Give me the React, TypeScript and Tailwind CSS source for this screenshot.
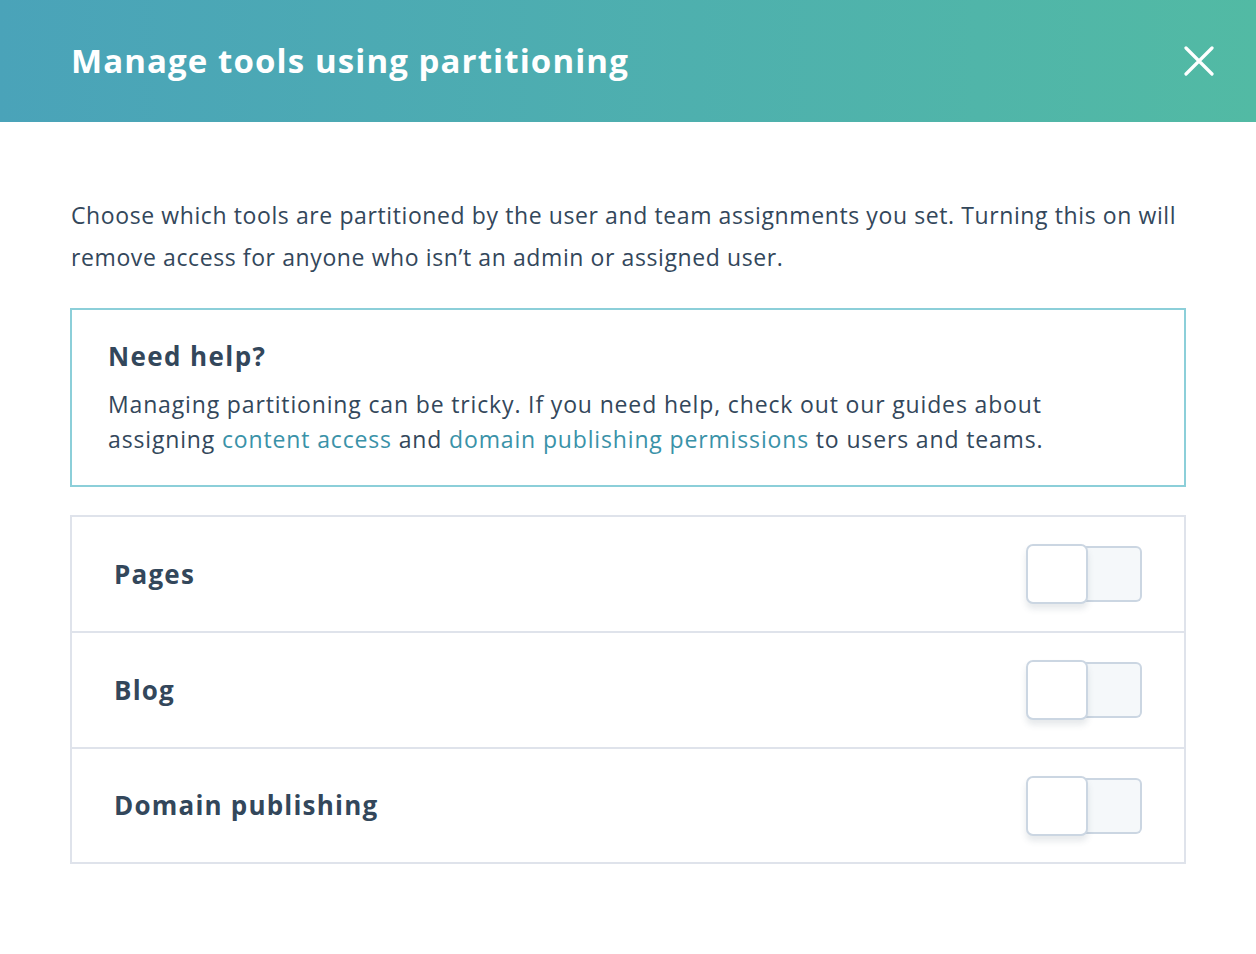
import React from "react";

const tools = [
  { label: "Pages", h: "h-[116px]" },
  { label: "Blog", h: "h-[116px]" },
  { label: "Domain publishing", h: "h-[113px]" },
];

function Toggle() {
  return (
    <div className="flex items-center w-[116px] h-[60px]">
      <div className="relative z-10 w-[62px] h-[60px] rounded-[7px] border-2 border-[#cbd6e2] bg-white shadow-[0_5px_6px_rgba(51,71,91,0.12)]" />
      <div className="-ml-[2px] w-[56px] h-[56px] rounded-r-[6px] border-2 border-l-0 border-[#cbd6e2] bg-[#f5f8fa]" />
    </div>
  );
}

export default function App() {
  return (
    <div
      className="w-[1256px] h-[954px] bg-white text-[#33475b]"
      style={{ fontFamily: "'Open Sans', Lato, sans-serif" }}
    >
      <div className="flex items-center justify-between h-[122px] pl-[71px] pr-[42px] bg-gradient-to-r from-[#4aa3b9] to-[#52baa4]">
        <h1 className="text-[33px] font-bold text-white tracking-[1.1px]">Manage tools using partitioning</h1>
        <button className="w-[30px] h-[30px] flex items-center justify-center">
          <svg width="30" height="30" viewBox="0 0 30 30">
            <path d="M2 2 L28 28 M28 2 L2 28" stroke="white" strokeWidth="3.2" strokeLinecap="round" />
          </svg>
        </button>
      </div>

      <div className="px-[70px] pt-[72px]">
        <p className="text-[23px] leading-[42px] pl-[1px] tracking-[0.6px]">
          Choose which tools are partitioned by the user and team assignments you set. Turning this on will remove access for anyone who isn’t an admin or assigned user.
        </p>

        <div className="mt-[30px] border-2 border-[#8ccfd9] pl-[36px] pr-[30px] pt-[28px] pb-[28px]">
          <h2 className="text-[26px] leading-[36px] font-bold tracking-[1.4px]">Need help?</h2>
          <p className="mt-[13px] text-[23px] leading-[35px] tracking-[0.85px]">
            Managing partitioning can be tricky. If you need help, check out our guides about
            <br />
            assigning <a className="text-[#3a92a8]">content access</a> and{" "}
            <a className="text-[#3a92a8]">domain publishing permissions</a> to users and teams.
          </p>
        </div>

        <div className="mt-[28px] border-2 border-[#dfe3eb]">
          {tools.map((t, i) => (
            <div
              key={t.label}
              className={
                "flex items-center justify-between pl-[42px] pr-[42px] " +
                t.h +
                (i < tools.length - 1 ? " border-b-2 border-[#dfe3eb]" : "")
              }
            >
              <span className="text-[26px] font-bold tracking-[1.2px]">{t.label}</span>
              <Toggle />
            </div>
          ))}
        </div>
      </div>
    </div>
  );
}
